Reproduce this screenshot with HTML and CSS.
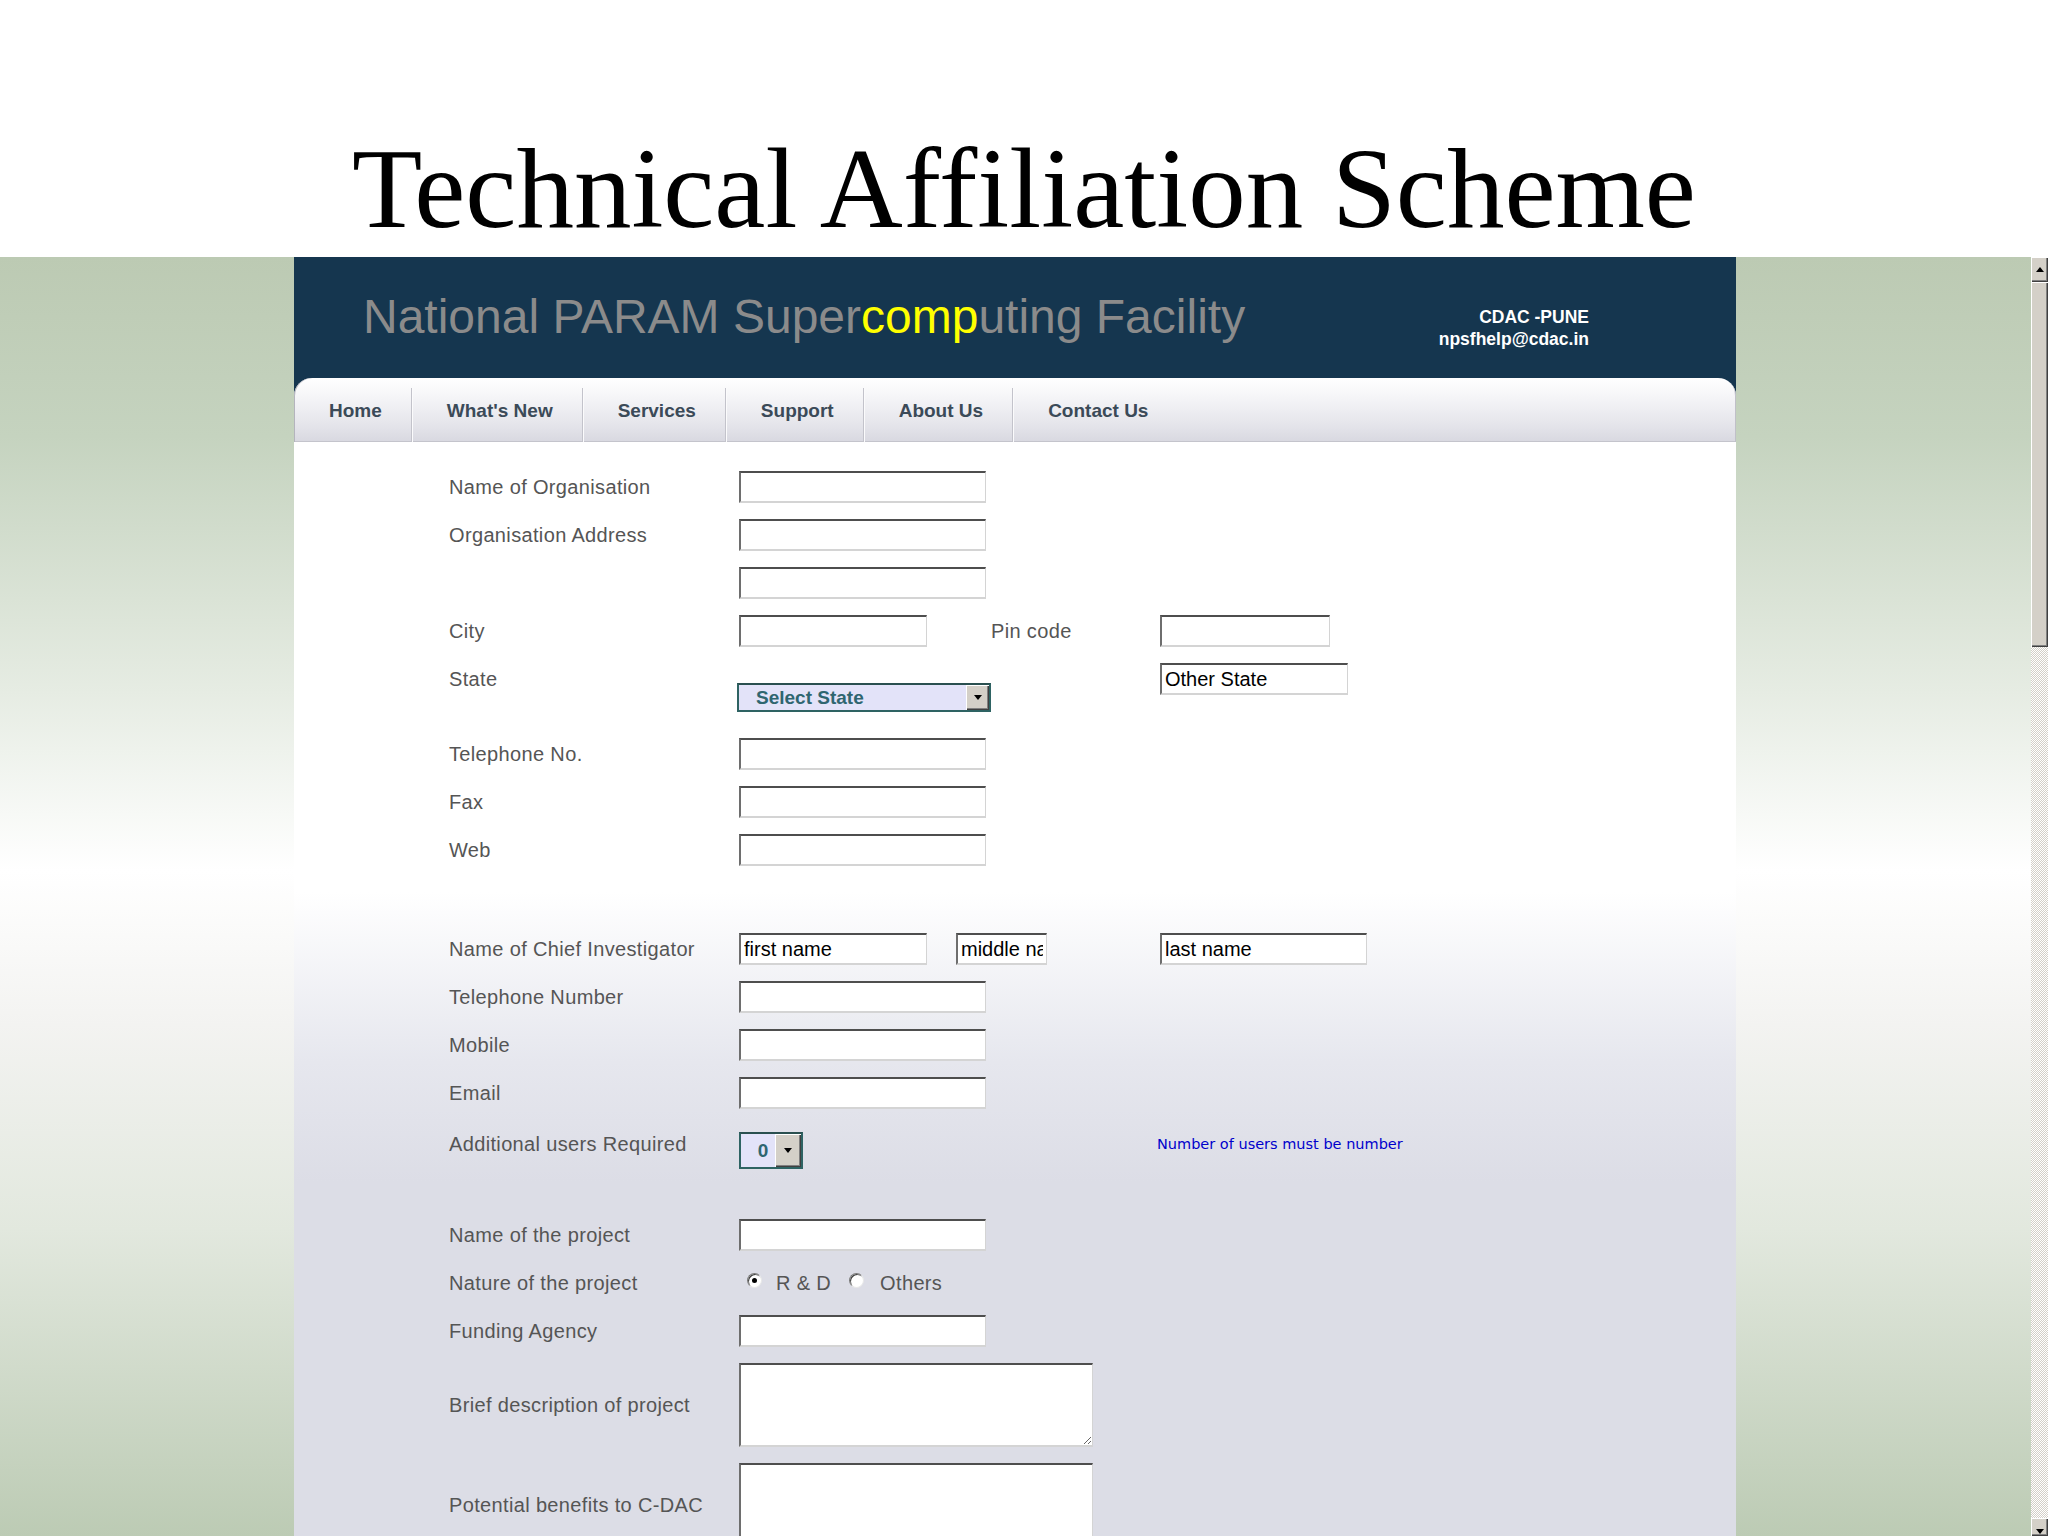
FILE: index.html
```html
<!DOCTYPE html>
<html lang="en">
<head>
    <meta charset="UTF-8">
    <meta name="viewport" content="width=device-width, initial-scale=1.0">
    <title>Technical Affiliation Scheme</title>
    <link rel="stylesheet" href="styles.css">
</head>
<body>
    <div class="slide-title">
        <h1>Technical Affiliation Scheme</h1>
    </div>

    <div class="screen">
        <div class="side"></div>

        <div class="page">
            <div class="masthead">
                <div class="site-name">National PARAM Super<span class="hl">comp</span>uting Facility</div>
                <div class="contact">CDAC -PUNE<br>npsfhelp@cdac.in</div>
            </div>

            <nav class="menu-wrap">
                <ul class="menu">
                    <li><a href="#">Home</a></li>
                    <li><a href="#">What's New</a></li>
                    <li><a href="#">Services</a></li>
                    <li><a href="#">Support</a></li>
                    <li><a href="#">About Us</a></li>
                    <li class="last"><a href="#">Contact Us</a></li>
                </ul>
            </nav>

            <div class="content">
                <form class="reg">
                    <div class="row">
                        <span class="label">Name of Organisation</span>
                        <input class="box" type="text">
                    </div>
                    <div class="row">
                        <span class="label">Organisation Address</span>
                        <input class="box" type="text">
                    </div>
                    <div class="row">
                        <span class="label"></span>
                        <input class="box" type="text">
                    </div>
                    <div class="row">
                        <span class="label">City</span>
                        <input class="box w-short" type="text">
                        <span class="label pin-label">Pin code</span>
                        <input class="box w-pin" type="text">
                    </div>
                    <div class="row row-state">
                        <span class="label">State</span>
                        <div class="dropdown state">
                            <span class="value">Select State</span>
                            <span class="arrow"><i></i></span>
                        </div>
                        <input class="box w-short other-state" type="text" value="Other State">
                    </div>
                    <div class="row">
                        <span class="label">Telephone No.</span>
                        <input class="box" type="text">
                    </div>
                    <div class="row">
                        <span class="label">Fax</span>
                        <input class="box" type="text">
                    </div>
                    <div class="row">
                        <span class="label">Web</span>
                        <input class="box" type="text">
                    </div>

                    <div class="row gap-1">
                        <span class="label">Name of Chief Investigator</span>
                        <input class="box w-short" type="text" value="first name">
                        <input class="box w-mid" type="text" value="middle name">
                        <input class="box w-last" type="text" value="last name">
                    </div>
                    <div class="row">
                        <span class="label">Telephone Number</span>
                        <input class="box" type="text">
                    </div>
                    <div class="row">
                        <span class="label">Mobile</span>
                        <input class="box" type="text">
                    </div>
                    <div class="row">
                        <span class="label">Email</span>
                        <input class="box" type="text">
                    </div>
                    <div class="row row-tall">
                        <span class="label">Additional users Required</span>
                        <div class="dropdown users">
                            <span class="value">0</span>
                            <span class="arrow"><i></i></span>
                        </div>
                        <span class="note">Number of users must be number</span>
                    </div>

                    <div class="row gap-2">
                        <span class="label">Name of the project</span>
                        <input class="box" type="text">
                    </div>
                    <div class="row">
                        <span class="label">Nature of the project</span>
                        <span class="radio checked first"></span>
                        <span class="opt">R &amp; D</span>
                        <span class="radio second"></span>
                        <span class="opt">Others</span>
                    </div>
                    <div class="row">
                        <span class="label">Funding Agency</span>
                        <input class="box" type="text">
                    </div>
                    <div class="row row-area">
                        <span class="label">Brief description of project</span>
                        <textarea class="box area"></textarea>
                    </div>
                    <div class="row row-area">
                        <span class="label">Potential benefits to C-DAC</span>
                        <textarea class="box area"></textarea>
                    </div>
                </form>
            </div>
        </div>

        <div class="side"></div>

        <div class="scrollbar">
            <div class="sb-btn up"><i></i></div>
            <div class="sb-thumb"></div>
            <div class="sb-track"></div>
            <div class="sb-btn down"><i></i></div>
        </div>
    </div>
</body>
</html>
```

FILE: styles.css
```css
body {
    margin: 0;
    width: 2048px;
    height: 1536px;
    overflow: hidden;
    font-family: "Liberation Sans", Arial, sans-serif;
    background: #fff;
}
.slide-title {
    height: 257px;
    box-sizing: border-box;
    padding-top: 131px;
    text-align: center;
    background: #fff;
}
.slide-title h1 {
    margin: 0;
    font: normal 115px/115px "Liberation Serif", "Times New Roman", serif;
    color: #000;
}
.screen {
    display: flex;
    height: 1279px;
    overflow: hidden;
    background: linear-gradient(to bottom, #bccab3 0%, #c5d3bf 14%, #e6ece3 34%, #ffffff 48%, #f3f3f1 60%, #e2e8de 76%, #bccbb4 100%);
}
.side {
    width: 294px;
    flex: none;
}
.side:nth-of-type(3) {
    width: 295px;
}
.page {
    width: 1442px;
    flex: none;
    display: flex;
    flex-direction: column;
}

/* header */
.masthead {
    height: 121px;
    flex: none;
    display: flex;
    justify-content: space-between;
    align-items: flex-start;
    padding: 0 147px 0 69px;
    background: #15364f;
}
.site-name {
    margin-top: 36px;
    font-size: 48px;
    line-height: 48px;
    color: #8b8b8b;
    white-space: nowrap;
}
.site-name .hl {
    color: #ffff00;
}
.contact {
    margin-top: 49px;
    text-align: right;
    font-weight: bold;
    font-size: 17.5px;
    line-height: 22px;
    color: #fff;
}

/* menu */
.menu-wrap {
    height: 64px;
    flex: none;
    background: #15364f;
}
.menu {
    display: flex;
    height: 64px;
    margin: 0;
    padding: 0;
    list-style: none;
    border-radius: 18px 18px 0 0;
    background: linear-gradient(to bottom, #ffffff 0%, #f3f3f6 35%, #e4e4ea 75%, #d8d8e0 100%);
    box-shadow: inset 1px 0 #b4b4bd, inset -9px 0 0 -8px #c0c0c8, inset 0 -1px #c4c4cc;
}
.menu li {
    margin-top: 10px;
    height: 54px;
    border-right: 1px solid #c3c3cb;
    box-shadow: 1px 0 #fbfbfc;
}
.menu li.last {
    border-right: 0;
    box-shadow: none;
}
.menu a {
    display: block;
    line-height: 46px;
    padding: 0 29px 8px 35px;
    font-weight: bold;
    font-size: 19px;
    color: #3b4a58;
    text-decoration: none;
    white-space: nowrap;
}

/* form */
.content {
    flex: 1;
    overflow: hidden;
    box-sizing: border-box;
    padding: 21px 0 0 155px;
    background: linear-gradient(to bottom, #ffffff 0px, #ffffff 450px, #e6e7ee 620px, #dcdde6 740px, #dcdde6 100%);
}
.reg {
    margin: 0;
}
.row {
    display: flex;
    align-items: center;
    height: 48px;
}
.row-state {
    height: 75px;
    align-items: flex-start;
}
.row-state .label {
    line-height: 48px;
}
.row-tall {
    height: 54px;
}
.row-area {
    height: 100px;
}
.gap-1 {
    margin-top: 51px;
}
.gap-2 {
    margin-top: 40px;
}
.label {
    width: 290px;
    flex: none;
    font-size: 20px;
    letter-spacing: 0.35px;
    color: #555;
    white-space: nowrap;
}
.pin-label {
    width: 169px;
    margin-left: 64px;
}
.box {
    box-sizing: border-box;
    width: 247px;
    height: 32px;
    margin: 0;
    padding: 0 3px;
    flex: none;
    border-style: solid;
    border-width: 2px 1px 2px 2px;
    border-color: #4e4e4e #d4d4d4 #d4d4d4 #6e6e6e;
    background: #fff;
    font-family: "Liberation Sans", Arial, sans-serif;
    font-size: 20px;
    color: #000;
    outline: none;
}
.w-short {
    width: 188px;
}
.w-pin {
    width: 170px;
}
.w-mid {
    width: 91px;
    margin-left: 29px;
}
.w-last {
    width: 207px;
    margin-left: 113px;
}
.other-state {
    margin-top: 8px;
    margin-left: 169px;
}
.area {
    width: 354px;
    height: 84px;
    padding: 2px 3px;
}

/* fake select boxes */
.dropdown {
    display: flex;
    flex: none;
    box-sizing: border-box;
    border: 2px solid #2e6363;
    border-top-color: #2a5050;
    background: #e3e3f9;
}
.dropdown .value {
    flex: 1;
    font-weight: bold;
    font-size: 19px;
    color: #2f6670;
    white-space: nowrap;
}
.dropdown .arrow {
    width: 23px;
    display: flex;
    align-items: center;
    justify-content: center;
    background: #d4d0c8;
    box-shadow: inset 1px 1px #fff, inset -1px -1px #404040, inset -2px -2px #808080;
}
.dropdown .arrow i,
.sb-btn.down i {
    width: 0;
    height: 0;
    border-left: 4px solid transparent;
    border-right: 4px solid transparent;
    border-top: 5px solid #000;
}
.state {
    width: 254px;
    height: 29px;
    margin: 28px 0 0 -2px;
}
.state .value {
    padding-left: 17px;
    line-height: 25px;
}
.users {
    width: 64px;
    height: 37px;
    margin-top: 12px;
}
.users .value {
    padding-left: 10px;
    text-align: center;
    line-height: 33px;
}
.users .arrow {
    width: 26px;
}
.note {
    margin-left: 354px;
    font-family: "DejaVu Sans", Verdana, sans-serif;
    font-size: 14.5px;
    color: #0000cc;
    white-space: nowrap;
}

/* radios */
.radio {
    position: relative;
    width: 15px;
    height: 15px;
    flex: none;
    box-sizing: border-box;
    margin-top: -6px;
    border-radius: 50%;
    border: 1px solid;
    border-color: #7a7a7a #e8e8e8 #e8e8e8 #7a7a7a;
    background: #fff;
    box-shadow: inset 1px 1px #404040;
}
.radio.checked::after {
    content: '';
    position: absolute;
    left: 4px;
    top: 4px;
    width: 5px;
    height: 5px;
    border-radius: 50%;
    background: #000;
}
.radio.first {
    margin-left: 8px;
    margin-right: 14px;
}
.radio.second {
    margin-left: 18px;
    margin-right: 16px;
}
.opt {
    font-size: 20px;
    letter-spacing: 0.35px;
    color: #555;
}

/* window scrollbar */
.scrollbar {
    width: 17px;
    flex: none;
    display: flex;
    flex-direction: column;
    background: repeating-conic-gradient(#d4d0c8 0 25%, #ffffff 0 50%) 0 0 / 2px 2px;
}
.sb-btn {
    display: flex;
    align-items: center;
    justify-content: center;
    background: #d4d0c8;
    box-shadow: inset 1px 1px #fff, inset -1px -1px #404040, inset -2px -2px #808080;
}
.sb-btn.up {
    height: 25px;
}
.sb-btn.up i {
    width: 0;
    height: 0;
    border-left: 4px solid transparent;
    border-right: 4px solid transparent;
    border-bottom: 5px solid #000;
}
.sb-btn.down {
    height: 18px;
    align-items: flex-end;
    padding-bottom: 2px;
    box-sizing: border-box;
}
.sb-thumb {
    height: 365px;
    background: #d4d0c8;
    box-shadow: inset 1px 1px #fff, inset -1px -1px #404040, inset -2px -2px #808080;
}
.sb-track {
    flex: 1;
}
```
